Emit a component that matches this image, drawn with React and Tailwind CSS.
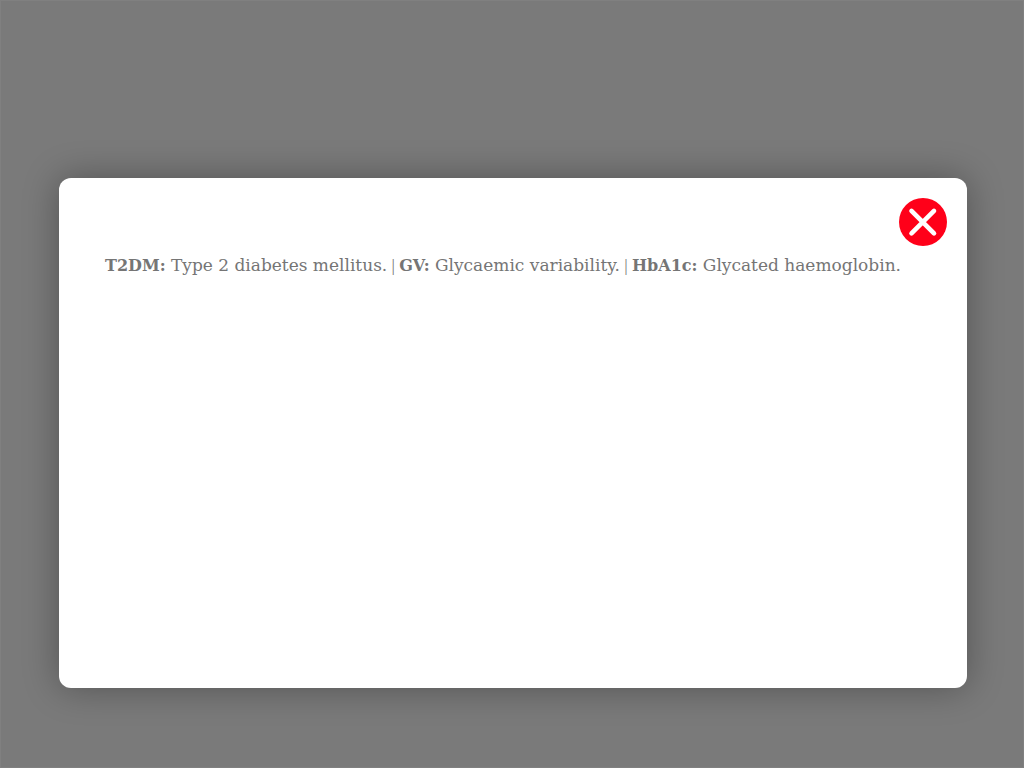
const terms = [
  { term: "T2DM:", meaning: "Type 2 diabetes mellitus." },
  { term: "GV:", meaning: "Glycaemic variability." },
  { term: "HbA1c:", meaning: "Glycated haemoglobin." },
];

function CloseButton() {
  return (
    <button type="button" aria-label="Close" className="block size-12 rounded-full">
      <svg viewBox="0 0 48 48" className="size-12" aria-hidden="true">
        <circle cx="24" cy="24" r="24" fill="#ff0019" />
        <path
          d="M12.5 12.9 L35 35.4 M35 12.9 L12.5 35.4"
          stroke="#fff"
          strokeWidth="4.6"
          strokeLinecap="round"
        />
      </svg>
    </button>
  );
}

export default function App() {
  return (
    <main className="min-h-screen border border-[#808080] bg-[#7a7a7a] pt-[177px] pr-[56px] pb-[79px] pl-[58px]">
      <section
        role="dialog"
        aria-label="Abbreviations"
        className="min-h-[510px] rounded-xl bg-white pt-5 pr-5 pb-12 pl-[46px] shadow-[0_0_36px_rgba(0,0,0,0.32)]"
      >
        <div className="flex justify-end">
          <CloseButton />
        </div>
        <p className="mt-[7px] font-['DejaVu_Serif',serif] text-[17px] leading-6 text-[#757575]">
          {terms.map(({ term, meaning }, index) => (
            <span key={term}>
              {index > 0 && <span className="font-['Liberation_Serif',serif]">{" | "}</span>}
              <b className="text-base leading-6 font-bold">{term}</b> {meaning}
            </span>
          ))}
        </p>
      </section>
    </main>
  );
}
